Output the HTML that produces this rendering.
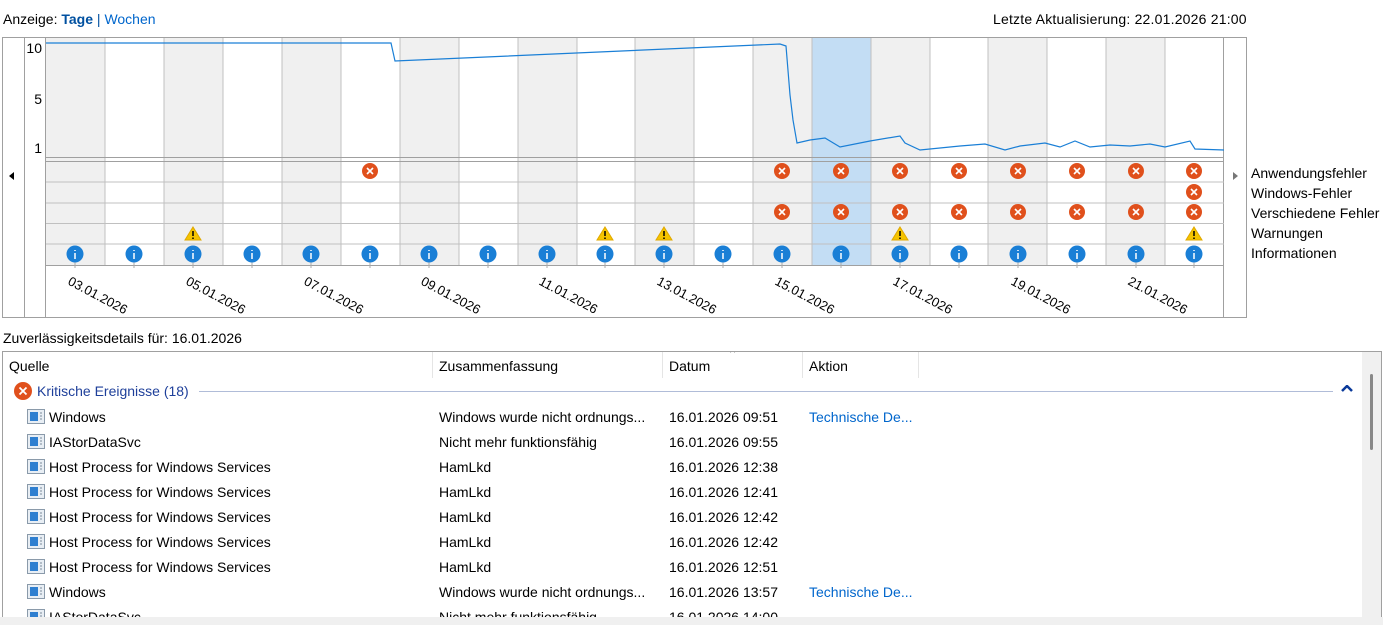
<!DOCTYPE html>
<html><head><meta charset="utf-8"><style>
body{margin:0;width:1383px;height:625px;background:#fff;font-family:"Liberation Sans",sans-serif;font-size:14px;color:#000;position:relative;overflow:hidden}
.a{position:absolute;white-space:nowrap}
.lnk{color:#0066cc}
</style></head><body>
<div class="a" style="left:3px;top:11px">Anzeige: <b style="color:#0050a0">Tage</b> <span style="color:#0050a0">|</span> <span class="lnk">Wochen</span></div>
<div class="a" style="left:993px;top:11px;letter-spacing:0.2px">Letzte Aktualisierung: 22.01.2026 21:00</div>

<svg class="a" style="left:0;top:0" width="1383" height="330">
<defs>
<g id="e"><circle r="8" fill="#e0501c"/><path d="M-3,-3L3,3M3,-3L-3,3" stroke="#fff" stroke-width="1.6"/></g>
<g id="w"><path d="M0,-7L8,6H-8Z" fill="#f5c400" stroke="#e0a800" stroke-width="1"/><path d="M0,-3V2M0,3.5V5" stroke="#000" stroke-width="1.5"/></g>
<g id="i"><line x1="0" y1="8" x2="0" y2="14" stroke="#aaa"/><circle r="8.5" fill="#1a7fd6"/><path d="M0,-4V-3M0,-1V5" stroke="#fff" stroke-width="1.5"/></g>
</defs>
<rect x="2.5" y="37.5" width="1244" height="280" fill="#fff" stroke="#a0a0a0"/>
<line x1="24.5" y1="38" x2="24.5" y2="318" stroke="#a0a0a0"/>
<line x1="45.5" y1="38" x2="45.5" y2="318" stroke="#a0a0a0"/>
<line x1="1223.5" y1="38" x2="1223.5" y2="318" stroke="#a0a0a0"/>
<g fill="#f0f0f0">
<rect x="46" y="38" width="59" height="227"/><rect x="164" y="38" width="59" height="227"/><rect x="282" y="38" width="59" height="227"/><rect x="400" y="38" width="59" height="227"/><rect x="518" y="38" width="59" height="227"/><rect x="635" y="38" width="59" height="227"/><rect x="753" y="38" width="59" height="227"/><rect x="871" y="38" width="59" height="227"/><rect x="988" y="38" width="59" height="227"/><rect x="1106" y="38" width="59" height="227"/>
</g>
<rect x="812" y="38" width="59" height="227" fill="#c3ddf4"/>
<g stroke="#c0c0c0">
<line x1="105" y1="38" x2="105" y2="265"/><line x1="164" y1="38" x2="164" y2="265"/><line x1="223" y1="38" x2="223" y2="265"/><line x1="282" y1="38" x2="282" y2="265"/><line x1="341" y1="38" x2="341" y2="265"/><line x1="400" y1="38" x2="400" y2="265"/><line x1="459" y1="38" x2="459" y2="265"/><line x1="518" y1="38" x2="518" y2="265"/><line x1="577" y1="38" x2="577" y2="265"/><line x1="635" y1="38" x2="635" y2="265"/><line x1="694" y1="38" x2="694" y2="265"/><line x1="753" y1="38" x2="753" y2="265"/><line x1="812" y1="38" x2="812" y2="265"/><line x1="871" y1="38" x2="871" y2="265"/><line x1="930" y1="38" x2="930" y2="265"/><line x1="988" y1="38" x2="988" y2="265"/><line x1="1047" y1="38" x2="1047" y2="265"/><line x1="1106" y1="38" x2="1106" y2="265"/><line x1="1165" y1="38" x2="1165" y2="265"/>
<line x1="46" y1="157.5" x2="1224" y2="157.5" stroke="#a0a0a0"/><line x1="46" y1="161.5" x2="1224" y2="161.5" stroke="#a0a0a0"/>
<line x1="46" y1="182" x2="1224" y2="182"/><line x1="46" y1="203" x2="1224" y2="203"/><line x1="46" y1="223.5" x2="1224" y2="223.5"/><line x1="46" y1="244" x2="1224" y2="244"/><line x1="46" y1="265.5" x2="1224" y2="265.5" stroke="#a0a0a0"/>
</g>
<path d="M46,43H391L395,61L780,44L786,46L790,95L793,120L797,143L810,140L825,138L840,147L870,141L900,136L905,143L920,150L960,146L985,144L1005,150L1020,146L1045,143L1060,147L1075,141L1090,147L1110,145L1130,146L1150,144L1165,147L1190,141L1195,149L1224,150" fill="none" stroke="#1a7fd6" stroke-width="1.2"/>
<g font-size="14" font-family="Liberation Sans,sans-serif" text-anchor="end"><text x="42" y="53">10</text><text x="42" y="104">5</text><text x="42" y="153">1</text></g>
<path d="M9,176L14,172V180Z" fill="#000"/>
<path d="M1233,172L1238,176L1233,180Z" fill="#777"/>
<use href="#e" x="370" y="171"/>
<use href="#e" x="782" y="171"/><use href="#e" x="841" y="171"/><use href="#e" x="900" y="171"/><use href="#e" x="959" y="171"/><use href="#e" x="1018" y="171"/><use href="#e" x="1077" y="171"/><use href="#e" x="1136" y="171"/><use href="#e" x="1194" y="171"/>
<use href="#e" x="1194" y="192"/>
<use href="#e" x="782" y="212"/><use href="#e" x="841" y="212"/><use href="#e" x="900" y="212"/><use href="#e" x="959" y="212"/><use href="#e" x="1018" y="212"/><use href="#e" x="1077" y="212"/><use href="#e" x="1136" y="212"/><use href="#e" x="1194" y="212"/>
<use href="#w" x="193" y="234"/><use href="#w" x="605" y="234"/><use href="#w" x="664" y="234"/><use href="#w" x="900" y="234"/><use href="#w" x="1194" y="234"/>
<use href="#i" x="75" y="254"/><use href="#i" x="134" y="254"/><use href="#i" x="193" y="254"/><use href="#i" x="252" y="254"/><use href="#i" x="311" y="254"/><use href="#i" x="370" y="254"/><use href="#i" x="429" y="254"/><use href="#i" x="488" y="254"/><use href="#i" x="547" y="254"/><use href="#i" x="605" y="254"/><use href="#i" x="664" y="254"/><use href="#i" x="723" y="254"/><use href="#i" x="782" y="254"/><use href="#i" x="841" y="254"/><use href="#i" x="900" y="254"/><use href="#i" x="959" y="254"/><use href="#i" x="1018" y="254"/><use href="#i" x="1077" y="254"/><use href="#i" x="1136" y="254"/><use href="#i" x="1194" y="254"/>
<g font-size="13" font-family="Liberation Sans,sans-serif">
<text transform="translate(67,284) rotate(28)">03.01.2026</text>
<text transform="translate(185,284) rotate(28)">05.01.2026</text>
<text transform="translate(303,284) rotate(28)">07.01.2026</text>
<text transform="translate(420,284) rotate(28)">09.01.2026</text>
<text transform="translate(538,284) rotate(28)">11.01.2026</text>
<text transform="translate(656,284) rotate(28)">13.01.2026</text>
<text transform="translate(774,284) rotate(28)">15.01.2026</text>
<text transform="translate(892,284) rotate(28)">17.01.2026</text>
<text transform="translate(1010,284) rotate(28)">19.01.2026</text>
<text transform="translate(1127,284) rotate(28)">21.01.2026</text>
</g>
<g font-size="14" font-family="Liberation Sans,sans-serif">
<text x="1251" y="178">Anwendungsfehler</text><text x="1251" y="198">Windows-Fehler</text><text x="1251" y="218">Verschiedene Fehler</text><text x="1251" y="238">Warnungen</text><text x="1251" y="258">Informationen</text>
</g>
</svg>

<div class="a" style="left:3px;top:330px">Zuverlässigkeitsdetails für: 16.01.2026</div>
<div class="a" style="left:2px;top:351px;width:1378px;height:265px;border:1px solid #a0a0a0;overflow:hidden">
 <div class="a" style="left:1359px;top:0;width:19px;height:265px;background:#f0f0f0"></div>
 <div class="a" style="left:1367px;top:22px;width:3px;height:76px;background:#888;border-radius:2px"></div>
 <div class="a" style="left:429px;top:0;width:1px;height:26px;background:#e5e5e5"></div>
 <div class="a" style="left:659px;top:0;width:1px;height:26px;background:#e5e5e5"></div>
 <div class="a" style="left:799px;top:0;width:1px;height:26px;background:#e5e5e5"></div>
 <div class="a" style="left:915px;top:0;width:1px;height:26px;background:#e5e5e5"></div>
 <div class="a" style="left:6px;top:6px">Quelle</div>
 <div class="a" style="left:436px;top:6px">Zusammenfassung</div>
 <div class="a" style="left:666px;top:6px">Datum</div>
 <div class="a" style="left:727px;top:-5px;font-size:11px;color:#888">^</div>
 <div class="a" style="left:806px;top:6px">Aktion</div>
 <svg class="a" style="left:10px;top:29px" width="20" height="20"><circle cx="10" cy="10" r="9" fill="#e0501c"/><path d="M6.5,6.5L13.5,13.5M13.5,6.5L6.5,13.5" stroke="#fff" stroke-width="1.8"/></svg>
 <div class="a" style="left:34px;top:31px;color:#1e3f9a">Kritische Ereignisse (18)</div>
 <div class="a" style="left:196px;top:39px;width:1134px;height:1px;background:#b0bcd8"></div>
 <svg class="a" style="left:1338px;top:33px" width="12" height="8"><path d="M1,6L6,1L11,6" stroke="#0a3a9a" stroke-width="2.5" fill="none"/></svg>
</div>
<div class="a" style="left:0;top:617px;width:1383px;height:8px;background:#f0f0f0"></div>

<svg width="0" height="0" style="position:absolute"><defs><g id="ic"><rect x="0.5" y="0.5" width="17" height="14" fill="#e8eef4" stroke="#8a9aaa"/><rect x="3" y="3" width="8" height="9" fill="#2f7fd0"/><path d="M13,4H15M13,7H15M13,10H15" stroke="#7a8a9a"/></g></defs></svg>

<div class="a" style="left:3px;top:409px">
<div class="a" style="left:24px;top:0"><svg width="18" height="15"><use href="#ic"/></svg></div><div class="a" style="left:46px;top:0">Windows</div><div class="a" style="left:436px;top:0">Windows wurde nicht ordnungs...</div><div class="a" style="left:666px;top:0">16.01.2026 09:51</div><div class="a lnk" style="left:806px;top:0">Technische De...</div>
</div>
<div class="a" style="left:3px;top:434px">
<div class="a" style="left:24px;top:0"><svg width="18" height="15"><use href="#ic"/></svg></div><div class="a" style="left:46px;top:0">IAStorDataSvc</div><div class="a" style="left:436px;top:0">Nicht mehr funktionsfähig</div><div class="a" style="left:666px;top:0">16.01.2026 09:55</div>
</div>
<div class="a" style="left:3px;top:459px">
<div class="a" style="left:24px;top:0"><svg width="18" height="15"><use href="#ic"/></svg></div><div class="a" style="left:46px;top:0">Host Process for Windows Services</div><div class="a" style="left:436px;top:0">HamLkd</div><div class="a" style="left:666px;top:0">16.01.2026 12:38</div>
</div>
<div class="a" style="left:3px;top:484px">
<div class="a" style="left:24px;top:0"><svg width="18" height="15"><use href="#ic"/></svg></div><div class="a" style="left:46px;top:0">Host Process for Windows Services</div><div class="a" style="left:436px;top:0">HamLkd</div><div class="a" style="left:666px;top:0">16.01.2026 12:41</div>
</div>
<div class="a" style="left:3px;top:509px">
<div class="a" style="left:24px;top:0"><svg width="18" height="15"><use href="#ic"/></svg></div><div class="a" style="left:46px;top:0">Host Process for Windows Services</div><div class="a" style="left:436px;top:0">HamLkd</div><div class="a" style="left:666px;top:0">16.01.2026 12:42</div>
</div>
<div class="a" style="left:3px;top:534px">
<div class="a" style="left:24px;top:0"><svg width="18" height="15"><use href="#ic"/></svg></div><div class="a" style="left:46px;top:0">Host Process for Windows Services</div><div class="a" style="left:436px;top:0">HamLkd</div><div class="a" style="left:666px;top:0">16.01.2026 12:42</div>
</div>
<div class="a" style="left:3px;top:559px">
<div class="a" style="left:24px;top:0"><svg width="18" height="15"><use href="#ic"/></svg></div><div class="a" style="left:46px;top:0">Host Process for Windows Services</div><div class="a" style="left:436px;top:0">HamLkd</div><div class="a" style="left:666px;top:0">16.01.2026 12:51</div>
</div>
<div class="a" style="left:3px;top:584px">
<div class="a" style="left:24px;top:0"><svg width="18" height="15"><use href="#ic"/></svg></div><div class="a" style="left:46px;top:0">Windows</div><div class="a" style="left:436px;top:0">Windows wurde nicht ordnungs...</div><div class="a" style="left:666px;top:0">16.01.2026 13:57</div><div class="a lnk" style="left:806px;top:0">Technische De...</div>
</div>
<div class="a" style="left:3px;top:609px;height:8px;overflow:hidden;width:1350px">
<div class="a" style="left:24px;top:0"><svg width="18" height="15"><use href="#ic"/></svg></div><div class="a" style="left:46px;top:0">IAStorDataSvc</div><div class="a" style="left:436px;top:0">Nicht mehr funktionsfähig</div><div class="a" style="left:666px;top:0">16.01.2026 14:00</div>
</div>
</body></html>
